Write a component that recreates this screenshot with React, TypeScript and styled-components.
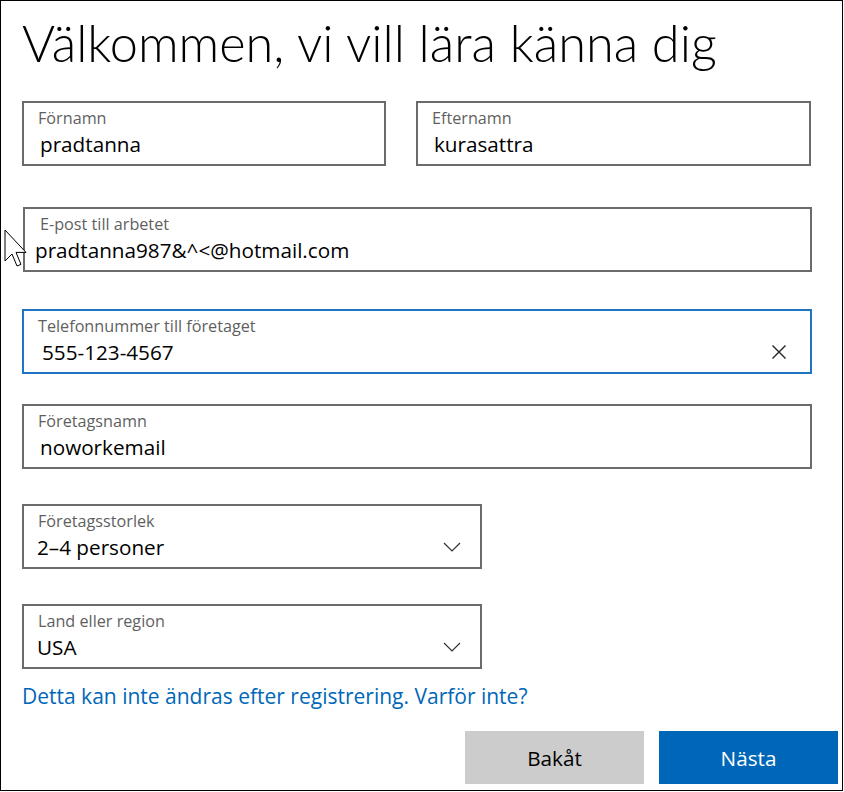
import React from "react";
import styled, { createGlobalStyle } from "styled-components";

const GlobalStyle = createGlobalStyle`
  html, body { margin: 0; padding: 0; background: #fff; }
  body { font-family: "Open Sans", "Noto Sans", sans-serif; }
`;

const Frame = styled.div`
  position: relative;
  box-sizing: border-box;
  width: 843px;
  height: 791px;
  border: 1px solid #000;
  padding: 0 0 0 21px;
  display: flex;
  flex-direction: column;
`;

const Title = styled.h1`
  margin: 8px 0 0 0;
  font-family: "Lato", sans-serif;
  font-weight: 300;
  font-size: 50.5px;
  line-height: 68px;
  color: #000;
  white-space: nowrap;
`;

const Row = styled.div<{ $top: number }>`
  display: flex;
  gap: 30px;
  margin-top: ${(p) => p.$top}px;
`;

const Box = styled.div<{ $w: number; $focus?: boolean; $dx?: number }>`
  box-sizing: border-box;
  width: ${(p) => p.$w}px;
  height: 65px;
  margin-left: ${(p) => p.$dx ?? 0}px;
  border: 2px solid ${(p) => (p.$focus ? "#1f74c4" : "#6b6b6b")};
  background: #fff;
  padding: 5px 14px 0 14px;
  display: grid;
  grid-template-columns: 1fr auto;
  grid-template-rows: 20px 26px;
  row-gap: 3px;
  align-items: center;
`;

const Label = styled.div<{ $dx?: number }>`
  grid-column: 1 / 3;
  padding-left: ${(p) => p.$dx ?? 0}px;
  font-size: 16.2px;
  line-height: 20px;
  color: #5f5f5f;
  white-space: nowrap;
`;

const Value = styled.div<{ $dx?: number }>`
  margin-left: ${(p) => p.$dx ?? 2}px;
  font-size: 20.7px;
  line-height: 26px;
  color: #000;
  white-space: nowrap;
`;

const IconSlot = styled.div<{ $mr: number }>`
  display: flex;
  align-items: center;
  margin-right: ${(p) => p.$mr}px;
`;

const Link = styled.a`
  margin-top: 13px;
  font-size: 21px;
  line-height: 28px;
  color: #0067b8;
  text-decoration: none;
  white-space: nowrap;
`;

const Footer = styled.div`
  display: flex;
  justify-content: flex-end;
  gap: 15px;
  margin-top: 21px;
  padding-right: 4px;
`;

const Button = styled.button<{ $primary?: boolean }>`
  width: 179px;
  height: 53px;
  border: none;
  background: ${(p) => (p.$primary ? "#0067b8" : "#cccccc")};
  color: ${(p) => (p.$primary ? "#fff" : "#000")};
  font-family: "Open Sans", sans-serif;
  font-size: 20.7px;
  padding: 0;
`;

const Cursor = styled.svg`
  position: absolute;
  left: 3px;
  top: 228px;
`;

const Clear = () => (
  <svg width="16" height="16" viewBox="0 0 16 16">
    <path d="M1.5 1.5 L14.5 14.5 M14.5 1.5 L1.5 14.5" stroke="#222" strokeWidth="1.4" fill="none" />
  </svg>
);

const Chevron = () => (
  <svg width="18" height="10" viewBox="0 0 18 10">
    <path d="M1 1 L9 9 L17 1" stroke="#333" strokeWidth="1.2" fill="none" />
  </svg>
);

export default function App() {
  return (
    <>
      <GlobalStyle />
      <Frame>
        <Title>Välkommen, vi vill lära känna dig</Title>
        <Row $top={24}>
          <Box $w={364}>
            <Label>Förnamn</Label>
            <Value>pradtanna</Value>
          </Box>
          <Box $w={395}>
            <Label>Efternamn</Label>
            <Value>kurasattra</Value>
          </Box>
        </Row>
        <Row $top={41}>
          <Box $w={789} $dx={1}>
            <Label $dx={1}>E-post till arbetet</Label>
            <Value $dx={-4}>pradtanna987&amp;^&lt;@hotmail.com</Value>
          </Box>
        </Row>
        <Row $top={37}>
          <Box $w={790} $focus>
            <Label>Telefonnummer till företaget</Label>
            <Value $dx={4}>555-123-4567</Value>
            <IconSlot $mr={9}>
              <Clear />
            </IconSlot>
          </Box>
        </Row>
        <Row $top={30}>
          <Box $w={790}>
            <Label>Företagsnamn</Label>
            <Value>noworkemail</Value>
          </Box>
        </Row>
        <Row $top={35}>
          <Box $w={460}>
            <Label>Företagsstorlek</Label>
            <Value $dx={-1}>2–4 personer</Value>
            <IconSlot $mr={5}>
              <Chevron />
            </IconSlot>
          </Box>
        </Row>
        <Row $top={35}>
          <Box $w={460}>
            <Label>Land eller region</Label>
            <Value $dx={-1}>USA</Value>
            <IconSlot $mr={5}>
              <Chevron />
            </IconSlot>
          </Box>
        </Row>
        <Link href="#">Detta kan inte ändras efter registrering. Varför inte?</Link>
        <Footer>
          <Button>Bakåt</Button>
          <Button $primary>Nästa</Button>
        </Footer>
        <Cursor width="24" height="40" viewBox="0 0 12 20">
          <path
            d="M0.5 0.5 L0.5 16 L4 12.5 L6.5 18.5 L8.5 17.7 L6 11.7 L11 11.7 Z"
            fill="#fff"
            stroke="#000"
            strokeWidth="0.5"
            strokeLinejoin="miter"
          />
        </Cursor>
      </Frame>
    </>
  );
}
